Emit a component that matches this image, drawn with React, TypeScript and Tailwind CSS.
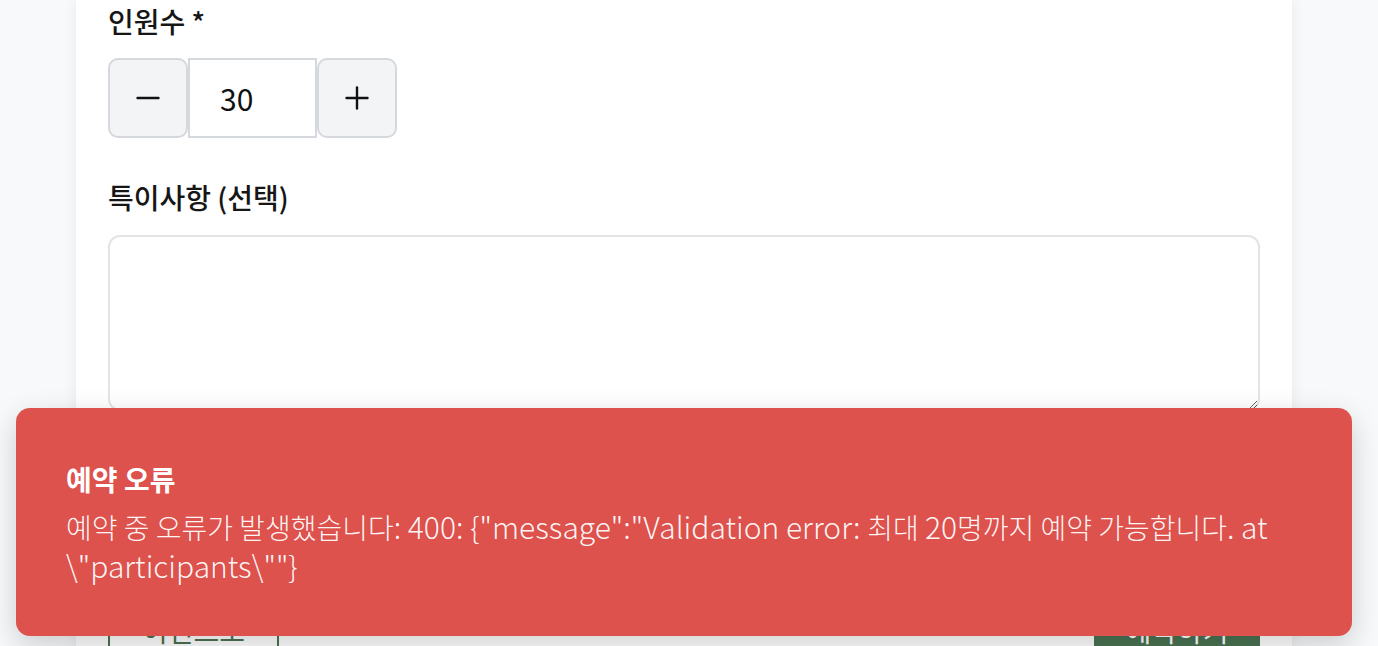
import { Minus, Plus } from 'lucide-react';

function App() {
  return (
    <div
      className="relative h-[646px] overflow-hidden bg-[#f8f9fb]"
      style={{ fontFamily: '"Noto Sans CJK KR", "Noto Sans", sans-serif' }}
    >
      <div className="ml-[76px] w-[1216px] h-[700px] bg-white shadow-[0_0_14px_rgba(0,0,0,0.07)] px-[32px] pt-[2px]">
        <label className="block text-[28px] leading-[38px] font-medium text-[#161616]">인원수 *</label>
        <div className="flex items-center mt-[18px]">
          <button className="w-[80px] h-[80px] flex items-center justify-center bg-[#f3f4f6] border-2 border-[#d5d8dd] rounded-[10px] text-[#111]">
            <Minus size={36} strokeWidth={1.6} />
          </button>
          <div className="w-[129px] h-[80px] flex items-center border-2 border-[#d5d8dd] bg-white pl-[30px] text-[30px] text-[#111]">
            30
          </div>
          <button className="w-[80px] h-[80px] flex items-center justify-center bg-[#f3f4f6] border-2 border-[#d5d8dd] rounded-[10px] text-[#111]">
            <Plus size={36} strokeWidth={1.6} />
          </button>
        </div>

        <label className="block mt-[40px] text-[28px] leading-[38px] font-medium text-[#161616]">특이사항 (선택)</label>
        <textarea className="block mt-[19px] w-[1152px] h-[176px] border-2 border-[#e4e4e4] rounded-[12px] bg-white" />

        <div className="flex justify-between mt-[186px]">
          <button className="w-[171px] h-[66px] border-2 border-[#4a7352] text-[#4a7352] text-[28px] bg-white">
            이전으로
          </button>
          <button className="w-[166px] h-[66px] bg-[#4a7352] text-white text-[28px]">
            예약하기
          </button>
        </div>
      </div>

      <div className="absolute left-[16px] top-[408px] w-[1336px] h-[228px] rounded-[14px] bg-[#dd524d] shadow-[0_10px_30px_rgba(0,0,0,0.18)] px-[50px] pt-[52px] text-white">
        <div className="text-[28px] leading-[38px] font-bold">예약 오류</div>
        <div className="mt-[9px] text-[28px] leading-[38px] font-light text-white/95">
          <span>예약 중 오류가 발생했습니다</span>
          <span className="text-[30px]">{': 400: {"message":"Validation error: '}</span>
          <span>최대 </span>
          <span className="text-[30px]">20</span>
          <span>명까지 예약 가능합니다</span>
          <span className="text-[30px]">{'. at \\"participants\\""}'}</span>
        </div>
      </div>
    </div>
  );
}

export default App;
